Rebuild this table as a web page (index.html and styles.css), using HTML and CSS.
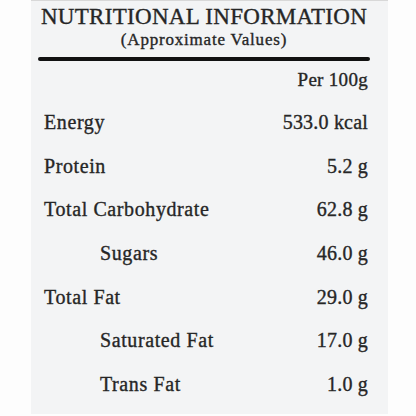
FILE: index.html
```html
<!DOCTYPE html>
<html lang="en">

<head>
    <meta charset="UTF-8">
    <meta name="viewport" content="width=device-width, initial-scale=1.0">
    <title>Nutritional Information</title>
    <link rel="stylesheet" href="styles.css">
</head>

<body>

    <div class="label">
        <!-- Header -->
        <h1 class="label-title">NUTRITIONAL INFORMATION</h1>
        <div class="label-subtitle">(Approximate Values)</div>
        <div class="label-rule"></div>

        <div class="per-serving">Per 100g</div>

        <!-- Nutrient rows -->
        <ul class="nutrients">
            <li class="nutrient"><span>Energy</span><span class="amount">533.0 kcal</span></li>
            <li class="nutrient"><span>Protein</span><span class="amount">5.2 g</span></li>
            <li class="nutrient"><span>Total Carbohydrate</span><span class="amount">62.8 g</span></li>
            <li class="nutrient sub"><span>Sugars</span><span class="amount">46.0 g</span></li>
            <li class="nutrient"><span>Total Fat</span><span class="amount">29.0 g</span></li>
            <li class="nutrient sub"><span>Saturated Fat</span><span class="amount">17.0 g</span></li>
            <li class="nutrient sub"><span>Trans Fat</span><span class="amount">1.0 g</span></li>
        </ul>
    </div>

</body>

</html>
```

FILE: styles.css
```css
* {
    margin: 0;
    padding: 0;
    box-sizing: border-box;
}

body {
    font-family: "Liberation Serif", "DejaVu Serif", serif;
    background-color: #fdfdfd;
    color: #262626;
    -webkit-text-stroke: 0.35px #262626;
}

.label {
    margin-left: 31px;
    width: 357px;
    height: 414px;
    background-color: #f3f4f5;
    border-top: 1px solid #d8d8d8;
    padding: 0 18px 0 7px;
}

.label-title {
    font-size: 23px;
    font-weight: normal;
    line-height: 24px;
    padding-top: 4px;
    text-align: center;
    letter-spacing: 0.3px;
}

.label-subtitle {
    font-size: 17px;
    line-height: 20px;
    text-align: center;
    letter-spacing: 0.8px;
    margin-top: 1px;
}

.label-rule {
    height: 4px;
    background-color: #111;
    border-radius: 2px;
    margin-top: 7px;
}

.per-serving {
    font-size: 19px;
    line-height: 22px;
    text-align: right;
    letter-spacing: 0.3px;
    padding-right: 2px;
    margin-top: 8px;
}

.nutrients {
    list-style: none;
    padding: 0 2px 0 6px;
    margin-top: 20px;
}

.nutrient {
    display: flex;
    justify-content: space-between;
    font-size: 20px;
    line-height: 22px;
    letter-spacing: 0.6px;
    margin-bottom: 21.7px;
}

.nutrient .amount {
    letter-spacing: 0.2px;
}

.nutrient.sub {
    padding-left: 56px;
}
```
